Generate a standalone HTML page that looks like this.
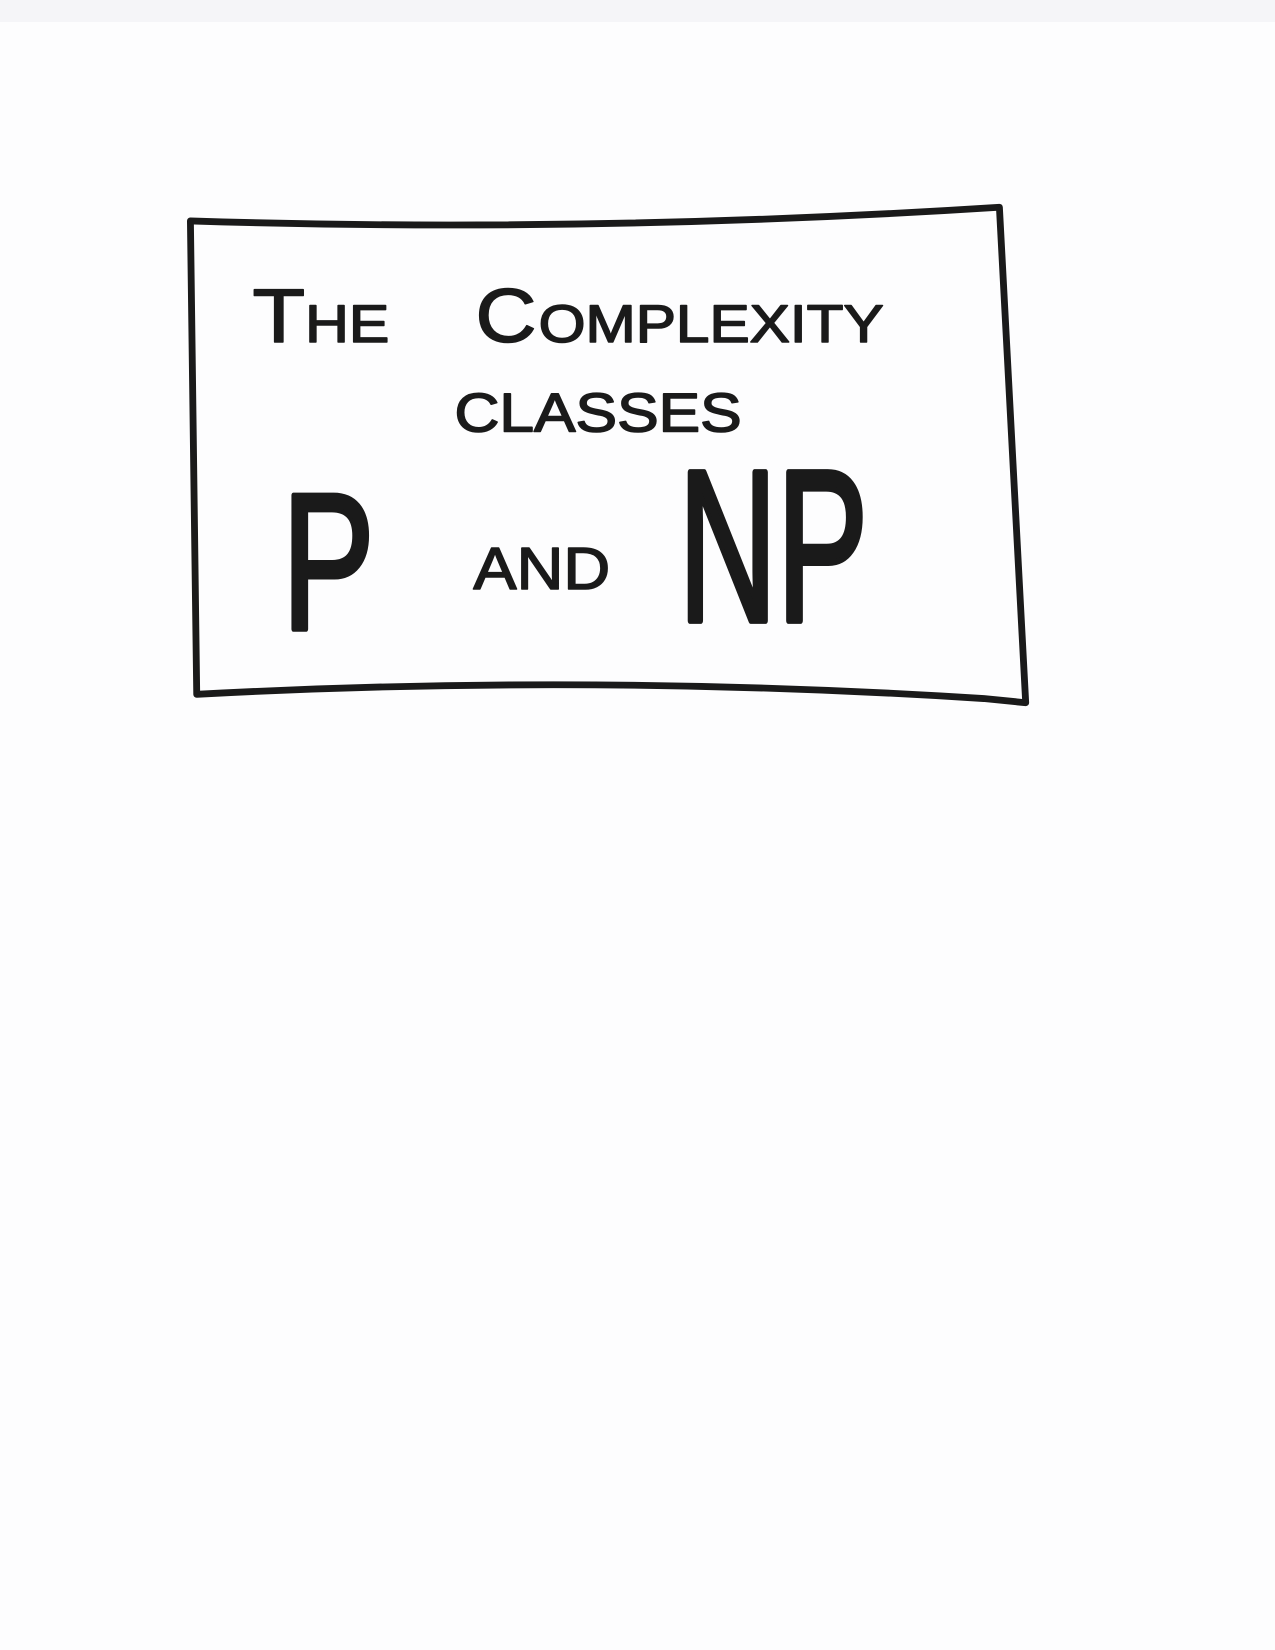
<!DOCTYPE html>
<html><head><meta charset="utf-8"><style>
html,body{margin:0;padding:0;background:#fdfdfe;}
svg{display:block}
</style></head><body>
<svg width="1275" height="1650" viewBox="0 0 1275 1650" xmlns="http://www.w3.org/2000/svg">
<rect width="1275" height="1650" fill="#fdfdfe"/>
<rect x="0" y="0" width="1275" height="22" fill="#f5f5f8"/>
<g transform="scale(1.052)">
<path d="M181 210 Q560 222 950 197 L975 668 L935 664 Q560 640 187 660 Z" fill="none" stroke="#1a1a1a" stroke-width="6.5" stroke-linejoin="round"/>
<g font-family="Liberation Sans, sans-serif" fill="#1a1a1a" stroke="#1a1a1a" stroke-linejoin="round">
<text x="240" y="325" font-size="72" stroke-width="1.5" textLength="50" lengthAdjust="spacingAndGlyphs">T</text>
<text x="290" y="325" font-size="50" stroke-width="1.5" textLength="80" lengthAdjust="spacingAndGlyphs">HE</text>
<text x="452" y="325" font-size="72" stroke-width="1.5" textLength="58" lengthAdjust="spacingAndGlyphs">C</text>
<text x="512" y="325" font-size="50" stroke-width="1.5" textLength="328" lengthAdjust="spacingAndGlyphs">OMPLEXITY</text>
<text x="432" y="410" font-size="52" stroke-width="1.5" textLength="273" lengthAdjust="spacingAndGlyphs">CLASSES</text>
<text x="268" y="598" font-size="185" stroke-width="5" textLength="88" lengthAdjust="spacingAndGlyphs">P</text>
<text x="450" y="560" font-size="56" stroke-width="1.5" textLength="130" lengthAdjust="spacingAndGlyphs">AND</text>
<text x="645" y="590" font-size="205" stroke-width="6" textLength="180" lengthAdjust="spacingAndGlyphs">NP</text>
</g>
</g>
</svg>
</body></html>
